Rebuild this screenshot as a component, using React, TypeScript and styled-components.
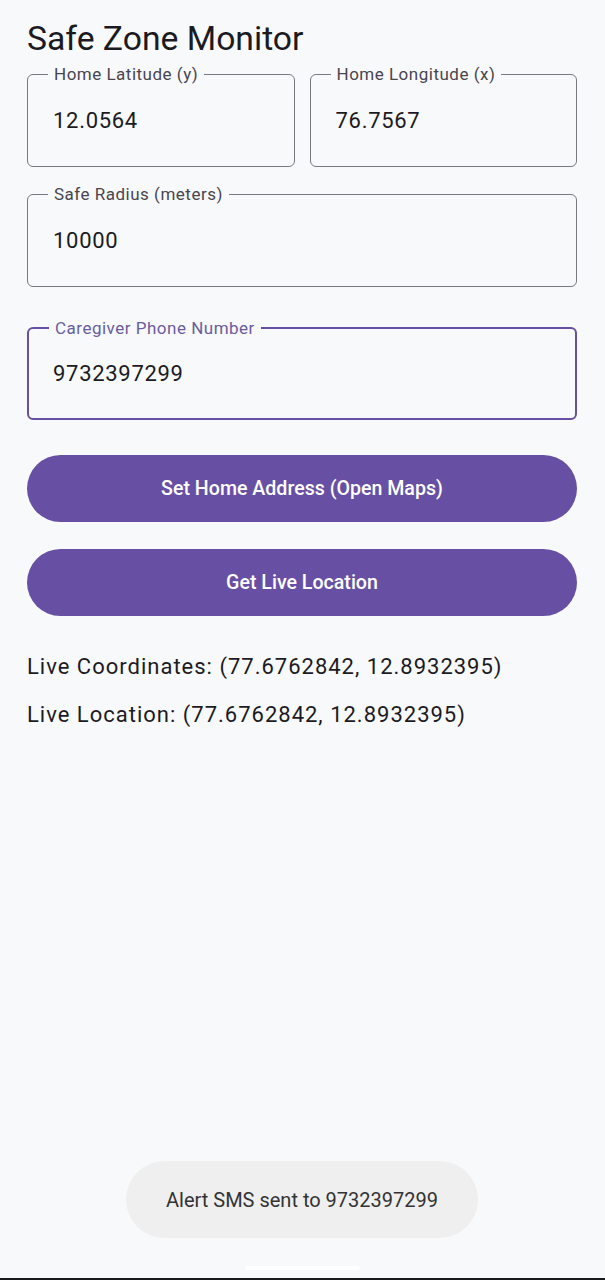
import React from 'react';
import styled, { createGlobalStyle } from 'styled-components';

const GlobalStyle = createGlobalStyle`
  html, body {
    margin: 0;
    padding: 0;
    background: #f8f9fb;
    font-family: Roboto, "Noto Sans", sans-serif;
  }
  * {
    box-sizing: border-box;
  }
`;

const App: React.FC = () => {
  return (
    <>
      <GlobalStyle />
      <Screen>
        <Title>Safe Zone Monitor</Title>

        {/* coordinates */}
        <FieldRow>
          <Field>
            <FieldLabel>Home Latitude (y)</FieldLabel>
            <FieldValue>12.0564</FieldValue>
          </Field>
          <Field>
            <FieldLabel>Home Longitude (x)</FieldLabel>
            <FieldValue>76.7567</FieldValue>
          </Field>
        </FieldRow>

        <Field $gap={27}>
          <FieldLabel>Safe Radius (meters)</FieldLabel>
          <FieldValue>10000</FieldValue>
        </Field>

        <Field $gap={40} $focused>
          <FieldLabel $focused>Caregiver Phone Number</FieldLabel>
          <FieldValue>9732397299</FieldValue>
        </Field>

        {/* actions */}
        <PillButton $gap={35}>Set Home Address (Open Maps)</PillButton>
        <PillButton $gap={27}>Get Live Location</PillButton>

        <InfoText $gap={37}>Live Coordinates: (77.6762842, 12.8932395)</InfoText>
        <InfoText $gap={20}>Live Location: (77.6762842, 12.8932395)</InfoText>
      </Screen>

      <Toast>Alert SMS sent to 9732397299</Toast>
      <GestureHandle />
      <BottomEdge />
    </>
  );
};

export default App;

/*** style ***/
const Screen = styled.div`
  display: flex;
  flex-direction: column;
  padding: 19px 28px 0 27px;
  min-height: 1280px;
`;

const Title = styled.h1`
  margin: 0;
  font-size: 33.7px;
  line-height: 40px;
  font-weight: 400;
  color: #1b1b1f;
`;

const FieldRow = styled.div`
  display: grid;
  grid-template-columns: 1fr 1fr;
  column-gap: 15px;
  margin-top: 15px;
`;

const Field = styled.div<{ $gap?: number; $focused?: boolean }>`
  position: relative;
  display: flex;
  align-items: center;
  height: 93px;
  margin-top: ${p => p.$gap ?? 0}px;
  padding-left: ${p => (p.$focused ? 24 : 25)}px;
  border: ${p => (p.$focused ? '2.5px solid #6750a4' : '1.5px solid #7a777f')};
  border-radius: 6px;
`;

const FieldLabel = styled.span<{ $focused?: boolean }>`
  position: absolute;
  top: -11px;
  left: 20px;
  padding: 0 6px;
  background: #f8f9fb;
  font-size: 17px;
  line-height: 20px;
  letter-spacing: 0.5px;
  color: ${p => (p.$focused ? '#6a5d9f' : '#49454f')};
`;

const FieldValue = styled.span`
  font-size: 22px;
  letter-spacing: 0.7px;
  color: #1c1b1f;
`;

const PillButton = styled.button<{ $gap: number }>`
  display: flex;
  align-items: center;
  justify-content: center;
  height: 67px;
  margin-top: ${p => p.$gap}px;
  border: none;
  border-radius: 34px;
  background: #6750a4;
  color: #ffffff;
  font-family: Roboto, sans-serif;
  font-size: 19.6px;
  font-weight: 500;
  letter-spacing: 0;
`;

const InfoText = styled.p<{ $gap: number }>`
  margin: ${p => p.$gap}px 0 0;
  font-size: 22px;
  line-height: 28px;
  letter-spacing: 1px;
  color: #1c1b1f;
`;

const Toast = styled.div`
  position: fixed;
  left: 126px;
  top: 1161px;
  width: 352px;
  height: 77px;
  display: flex;
  align-items: center;
  justify-content: center;
  border-radius: 39px;
  background: #efefef;
  color: #333333;
  font-size: 20px;
`;

const GestureHandle = styled.div`
  position: fixed;
  left: 245px;
  top: 1266px;
  width: 115px;
  height: 4px;
  border-radius: 2px;
  background: #ffffff;
`;

const BottomEdge = styled.div`
  position: fixed;
  left: 0;
  right: 0;
  bottom: 0;
  height: 2px;
  background: #1a1a1a;
`;
